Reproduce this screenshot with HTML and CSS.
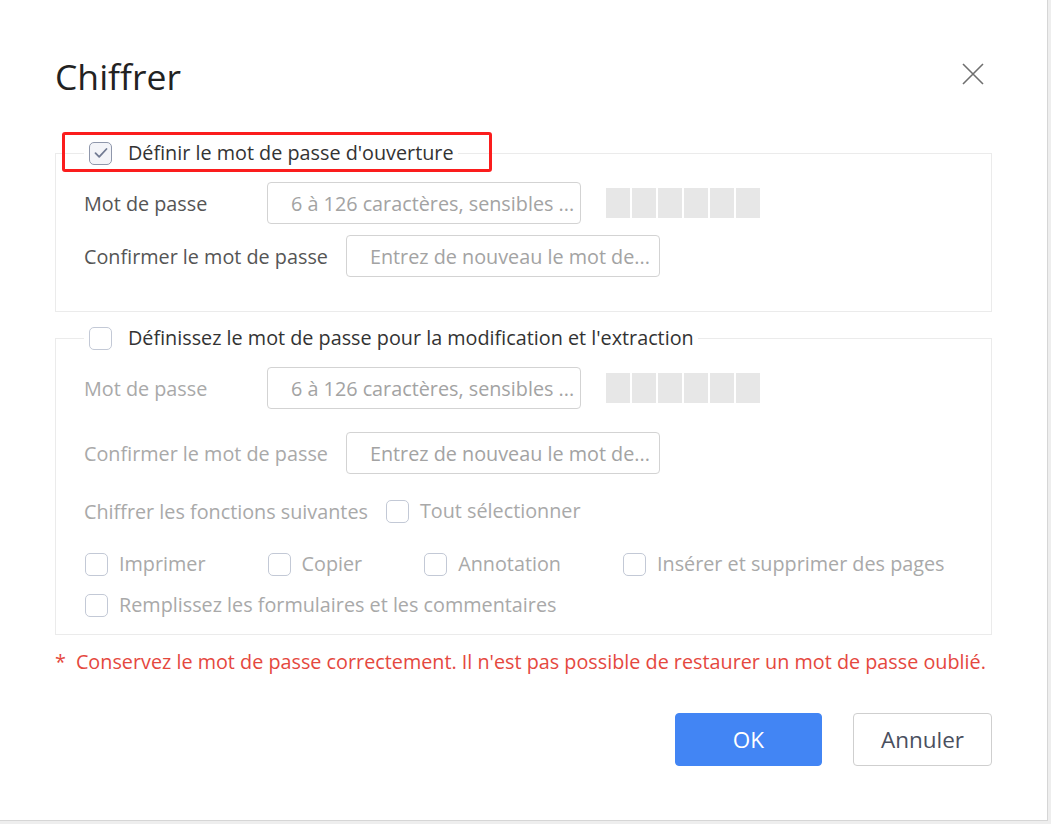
FILE: index.html
```html
<!DOCTYPE html>
<html lang="fr">
<head>
<meta charset="utf-8">
<title>Chiffrer</title>
<link rel="stylesheet" href="styles.css">
</head>
<body>
<div class="dialog">
  <div class="header">
    <h1 class="title">Chiffrer</h1>
    <button class="close" aria-label="Fermer">
      <svg width="22" height="22" viewBox="0 0 22 22"><path d="M1 1L21 21M21 1L1 21" stroke="#6f6f6f" stroke-width="1.6" fill="none"/></svg>
    </button>
  </div>

  <fieldset class="section">
    <legend class="legend highlighted">
      <span class="check checked">
        <svg width="14" height="12" viewBox="0 0 14 12"><path d="M1.5 6.2L5.2 9.8L12.5 2" stroke="#727b93" stroke-width="1.8" fill="none" stroke-linecap="round" stroke-linejoin="round"/></svg>
      </span>
      <span class="legend-text">Définir le mot de passe d'ouverture</span>
      <span class="annot"></span>
    </legend>
    <div class="row first">
      <span class="label">Mot de passe</span>
      <div class="input">6 à 126 caractères, sensibles ...</div>
      <div class="strength"><i></i><i></i><i></i><i></i><i></i><i></i></div>
    </div>
    <div class="row second">
      <span class="label">Confirmer le mot de passe</span>
      <div class="input">Entrez de nouveau le mot de...</div>
    </div>
  </fieldset>

  <fieldset class="section disabled">
    <legend class="legend">
      <span class="check"></span>
      <span class="legend-text">Définissez le mot de passe pour la modification et l'extraction</span>
    </legend>
    <div class="row first">
      <span class="label">Mot de passe</span>
      <div class="input">6 à 126 caractères, sensibles ...</div>
      <div class="strength"><i></i><i></i><i></i><i></i><i></i><i></i></div>
    </div>
    <div class="row second2">
      <span class="label">Confirmer le mot de passe</span>
      <div class="input">Entrez de nouveau le mot de...</div>
    </div>
    <div class="row funcs">
      <span class="label">Chiffrer les fonctions suivantes</span>
      <label class="opt"><span class="check"></span>Tout sélectionner</label>
    </div>
    <div class="opts">
      <label class="opt"><span class="check"></span>Imprimer</label>
      <label class="opt"><span class="check"></span>Copier</label>
      <label class="opt"><span class="check"></span>Annotation</label>
      <label class="opt"><span class="check"></span>Insérer et supprimer des pages</label>
      <label class="opt"><span class="check"></span>Remplissez les formulaires et les commentaires</label>
    </div>
  </fieldset>

  <p class="warning"><span class="star">*</span>Conservez le mot de passe correctement. Il n'est pas possible de restaurer un mot de passe oublié.</p>

  <div class="actions">
    <button class="btn primary">OK</button>
    <button class="btn secondary">Annuler</button>
  </div>
</div>
</body>
</html>
```

FILE: styles.css
```css
* { box-sizing: border-box; }
html, body { margin: 0; padding: 0; }
body {
  background: #eeeeee;
  font-family: "Open Sans", "Noto Sans", sans-serif;
  color: #333;
  width: 1051px;
  height: 824px;
  overflow: hidden;
}
.dialog {
  width: 1048px;
  height: 821px;
  background: #fff;
  border-right: 1px solid #d6d6d6;
  border-bottom: 1px solid #d6d6d6;
  padding: 0 55px;
}
.header {
  height: 141px;
  display: flex;
  justify-content: space-between;
  align-items: flex-start;
}
.title {
  margin: 0;
  padding-top: 56px;
  font-size: 35.5px;
  font-weight: 400;
  line-height: 41px;
  color: #222;
}
.close {
  margin-top: 63px;
  margin-right: 8px;
  padding: 0;
  border: 0;
  background: none;
  width: 22px;
  height: 22px;
}
.section {
  margin: 0;
  border: 1px solid #ebebeb;
  padding: 0 28px 34px 28px;
  min-width: 0;
}
.section.disabled {
  margin-top: 14px;
  padding-bottom: 17px;
}
.legend {
  padding: 0 4px 0 5px;
  height: 24px;
  display: flex;
  align-items: center;
  position: relative;
  font-size: 19.8px;
  color: #333;
}
.legend .check { margin-right: 16px; }
.legend-text { line-height: 24px; white-space: nowrap; }
.annot {
  position: absolute;
  left: -22px;
  top: -9px;
  width: 430px;
  height: 40px;
  border: 3px solid #fb1d1d;
  border-radius: 3px;
}
.check {
  width: 23px;
  height: 23px;
  border: 1.5px solid #c3c9d6;
  border-radius: 5px;
  background: #fff;
  display: inline-flex;
  align-items: center;
  justify-content: center;
  flex: none;
}
.check.checked {
  border-color: #8f97ab;
  background: #f3f4f8;
}
.row {
  display: flex;
  align-items: center;
  font-size: 19.8px;
}
.row.first { margin-top: 17px; }
.row.second { margin-top: 11px; }
.row.second2 { margin-top: 23px; }
.row.funcs { margin-top: 25px; height: 24px; }
.label {
  min-width: 165px;
  margin-right: 18px;
  color: #555;
  white-space: nowrap;
}
.disabled .label { color: #a9a9a9; }
.funcs .label { min-width: 0; margin-right: 18px; }
.input {
  width: 314px;
  height: 42px;
  border: 1px solid #d3d3d3;
  border-radius: 4px;
  padding: 0 23px;
  display: flex;
  align-items: center;
  color: #a3a3a3;
  white-space: nowrap;
  overflow: hidden;
}
.strength {
  display: flex;
  gap: 2px;
  margin-left: 25px;
}
.strength i {
  width: 24px;
  height: 30px;
  background: #e7e7e7;
}
.opt {
  display: inline-flex;
  align-items: center;
  gap: 11px;
  color: #a9a9a9;
  font-size: 19.8px;
  line-height: 24px;
  white-space: nowrap;
}
.opts {
  margin-top: 29px;
  padding-left: 1px;
  display: flex;
  flex-wrap: wrap;
  column-gap: 62px;
  row-gap: 17px;
}
.warning {
  margin: 15px 0 0;
  font-size: 19.8px;
  line-height: 24px;
  color: #e5483e;
}
.star { margin-right: 10px; }
.actions {
  margin-top: 39px;
  display: flex;
  justify-content: flex-end;
  gap: 31px;
}
.btn {
  height: 53px;
  border-radius: 4px;
  font-family: inherit;
  font-size: 22.5px;
}
.primary {
  width: 147px;
  background: #4285f4;
  border: 1px solid #4285f4;
  color: #fff;
}
.secondary {
  width: 139px;
  background: #fff;
  border: 1px solid #cfcfcf;
  color: #4a4f5e;
}
```
